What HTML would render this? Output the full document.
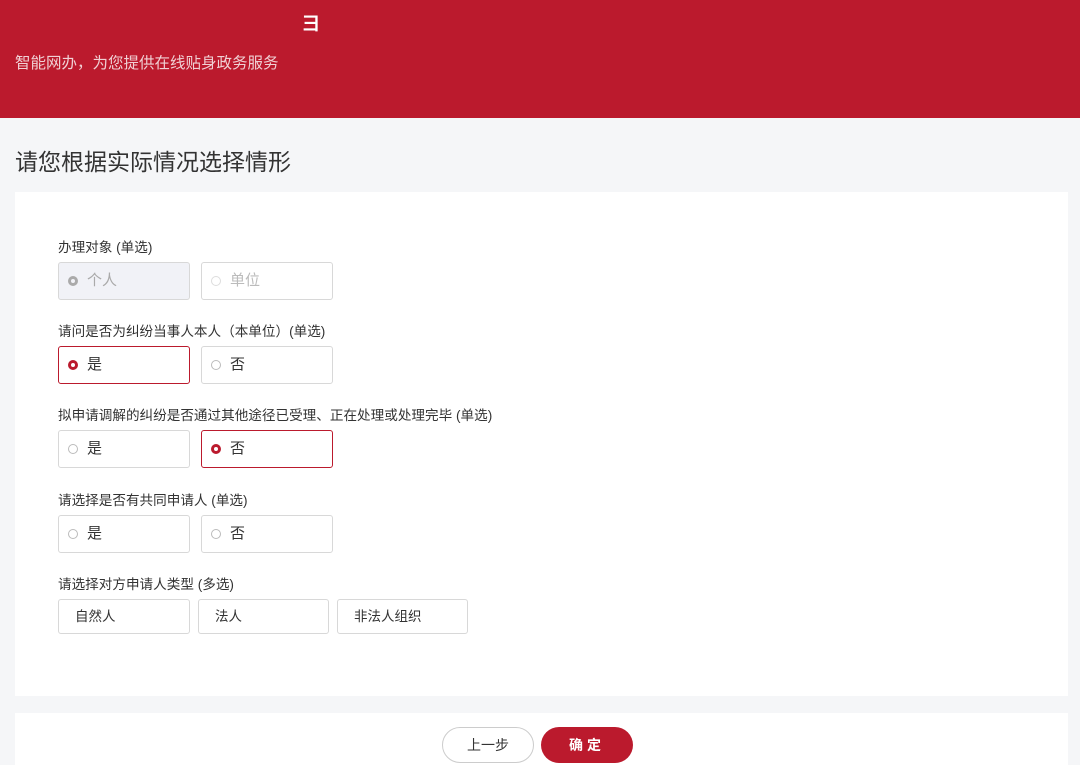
<!DOCTYPE html><html><head><meta charset="utf-8"><style>
body{margin:0;width:1080px;height:765px;background:#f5f6f8;font-family:"Liberation Sans","Noto Sans CJK SC",sans-serif;position:relative;overflow:hidden}
.hd{position:absolute;left:0;top:0;width:1080px;height:118px;background:#bb1a2d}
.a{position:absolute}
.lbl{font-size:13.6px;color:#333}
.opt{position:absolute;width:132px;height:38px;border:1px solid #d8d8d8;border-radius:3px;box-sizing:border-box;background:#fff;font-size:15px;color:#333;line-height:36px;padding-left:28px}
.opt i{position:absolute;left:9px;top:13px;width:10px;height:10px;border:1px solid #bbb;border-radius:50%;box-sizing:border-box}
.opt.on{border-color:#bb1a2d}
.opt.on i{border:3px solid #bb1a2d;background:#fff}
.opt.dis{background:#f1f2f7;color:#aaa}
.opt.dis i{border:3px solid #aaa}
.opt.dis2{color:#bbb}
.opt.dis2 i{border-color:#ddd}
.chk{position:absolute;height:35px;border:1px solid #d8d8d8;box-sizing:border-box;border-radius:3px;background:#fff;font-size:13.5px;color:#333;line-height:33px;padding-left:16px}
</style></head><body>
<div class="hd"></div>
<div class="a" style="left:302px;top:10px;color:#fff;font-size:18px;font-weight:bold">彐</div>
<div class="a" style="left:15px;top:51px;color:#f0d0d4;font-size:15.5px">智能网办，为您提供在线贴身政务服务</div>
<div class="a" style="left:15px;top:143px;font-size:23px;color:#333">请您根据实际情况选择情形</div>
<div class="a" style="left:15px;top:192px;width:1053px;height:504px;background:#fff"></div>
<div class="a lbl" style="left:58px;top:236px">办理对象 (单选)</div>
<div class="opt dis" style="left:58px;top:262px"><i></i>个人</div>
<div class="opt dis2" style="left:201px;top:262px"><i></i>单位</div>
<div class="a lbl" style="left:58px;top:320px">请问是否为纠纷当事人本人（本单位）(单选)</div>
<div class="opt on" style="left:58px;top:346px"><i></i>是</div>
<div class="opt" style="left:201px;top:346px"><i></i>否</div>
<div class="a lbl" style="left:58px;top:404px">拟申请调解的纠纷是否通过其他途径已受理、正在处理或处理完毕 (单选)</div>
<div class="opt" style="left:58px;top:430px"><i></i>是</div>
<div class="opt on" style="left:201px;top:430px"><i></i>否</div>
<div class="a lbl" style="left:58px;top:489px">请选择是否有共同申请人 (单选)</div>
<div class="opt" style="left:58px;top:515px"><i></i>是</div>
<div class="opt" style="left:201px;top:515px"><i></i>否</div>
<div class="a lbl" style="left:58px;top:573px">请选择对方申请人类型 (多选)</div>
<div class="chk" style="left:58px;top:599px;width:132px">自然人</div>
<div class="chk" style="left:198px;top:599px;width:131px">法人</div>
<div class="chk" style="left:337px;top:599px;width:131px">非法人组织</div>
<div class="a" style="left:15px;top:713px;width:1053px;height:52px;background:#fff"></div>
<div class="a" style="left:442px;top:727px;width:92px;height:36px;border:1px solid #ccc;border-radius:18px;box-sizing:border-box;text-align:center;line-height:34px;font-size:14px;color:#333;background:#fff">上一步</div>
<div class="a" style="left:541px;top:727px;width:92px;height:36px;border-radius:18px;background:#bb1a2d;text-align:center;line-height:36px;font-size:14px;color:#fff;font-weight:bold;letter-spacing:4px">确定</div>
</body></html>
